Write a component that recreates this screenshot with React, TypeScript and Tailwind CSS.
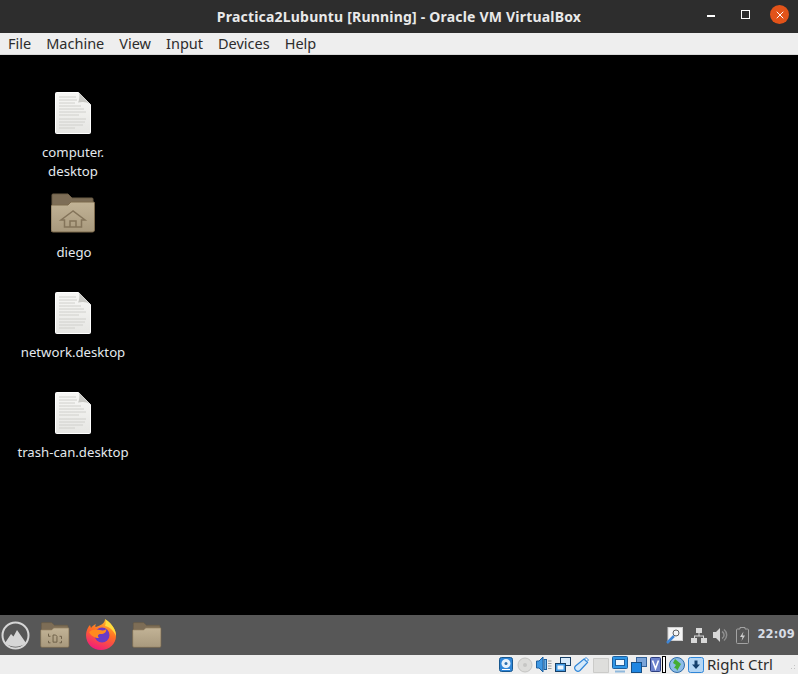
import type { ReactNode } from "react";
import { X } from "lucide-react";

const menus = ["File", "Machine", "View", "Input", "Devices", "Help"];

function DocIcon() {
  return (
    <svg width="36" height="42" viewBox="0 0 36 42">
      <defs>
        <linearGradient id="paper" x1="0" y1="0" x2="0" y2="1">
          <stop offset="0" stopColor="#f8f8f6" />
          <stop offset="1" stopColor="#e6e6e3" />
        </linearGradient>
      </defs>
      <path d="M1.500 0.500h22l12 12v28a1 1 0 0 1-1 1H1.500a1 1 0 0 1-1-1V1.500a1 1 0 0 1 1-1z" fill="url(#paper)" stroke="#ffffff" />
      <path d="M24 0.500c1 4 0 8-1 10 4-1 9-1 12.500 2z" fill="#c9c9c5" />
      <g stroke="#d0d0cc" strokeWidth="1">
        <path d="M4 5h17M4 8h18M4 11h16M4 14h22M4 17h25M4 20h27M4 23h20" />
        <path d="M4 27h27M4 30h26M4 33h24M4 36h16" />
      </g>
    </svg>
  );
}

function Folder({ w, h, children }: { w: number; h: number; children?: ReactNode }) {
  return (
    <svg width={w} height={h} viewBox="0 0 44 40">
      <defs>
        <linearGradient id="folderBody" x1="0" y1="0" x2="0" y2="1">
          <stop offset="0" stopColor="#c2b396" />
          <stop offset="1" stopColor="#a8997d" />
        </linearGradient>
      </defs>
      <path d="M2 1h15l4 4h20a1 1 0 0 1 1 1v10H1V2a1 1 0 0 1 1-1z" fill="#7d6d56" stroke="#6b5c45" />
      <path d="M1 12h16l3-3h22.500a1 1 0 0 1 1 1v27a2 2 0 0 1-2 2H2a2 2 0 0 1-2-2V13z" fill="url(#folderBody)" stroke="#7d6a4d" />
      {children}
    </svg>
  );
}

function Label({ children }: { children: string }) {
  return <div className="text-center text-[13.2px] leading-[19px] text-[#e4e9ee]">{children}</div>;
}

function Firefox() {
  return (
    <svg width="32" height="32" viewBox="0 0 32 32">
      <defs>
        <linearGradient id="ff" x1="0.75" y1="0" x2="0.35" y2="1">
          <stop offset="0" stopColor="#ffc22e" />
          <stop offset="0.45" stopColor="#ff6f24" />
          <stop offset="1" stopColor="#f01a7c" />
        </linearGradient>
      </defs>
      <path d="M20 1c1 3 4 4 7 7 4 4 4 8 4 10 0 8-7 14-15 14S1 26 1 17c0-4 2-8 4-10l1 3c1-2 3-3 5-4-1 2-1 3 0 3 3-1 9-3 9-8z" fill="url(#ff)" />
      <path d="M20 1c5 3 11 9 11 17-2-5-6-9-11-10 1-2 1-5 0-7z" fill="#ffdc3e" />
      <circle cx="17" cy="17" r="7.500" fill="#6a3bc4" />
      <path d="M4 14c3-3 8-3 11-2 3 1 6 0 6-1 1 3-2 5-5 5-3 0-4 2-2 4-4 0-8-2-10-6z" fill="#ff8a1e" />
    </svg>
  );
}

function StatusIcons() {
  return (
    <div className="flex items-center gap-[3px]">
      {/* hard disk */}
      <svg width="16" height="17" viewBox="0 0 16 17">
        <rect x="1.500" y="1.500" width="13" height="14" rx="2" fill="#2f86d8" stroke="#17578f" />
        <circle cx="8" cy="7.500" r="4.500" fill="#e8f2fb" />
        <circle cx="8" cy="7.500" r="1.500" fill="#2b6fae" />
        <path d="M4 13.500h8" stroke="#ffffff" />
      </svg>
      {/* optical disk */}
      <svg width="16" height="16" viewBox="0 0 16 16">
        <circle cx="8" cy="8" r="7" fill="#dcdcda" stroke="#c4c4c2" />
        <circle cx="8" cy="8" r="2" fill="#c6c6c4" />
      </svg>
      {/* audio */}
      <svg width="16" height="17" viewBox="0 0 16 17">
        <path d="M0.500 5h2.500l4-4v15l-4-4H0.500z" fill="#3f97e2" stroke="#1c5f9e" />
        <rect x="8" y="3.500" width="2.500" height="10" fill="#67aee8" stroke="#1c5f9e" />
        <path d="M12 5h3.500M12 7.500h3.500M12 10h3.500M12 12.500h3.500" stroke="#9a9a9a" />
      </svg>
      {/* network */}
      <svg width="16" height="16" viewBox="0 0 16 16">
        <rect x="5.500" y="0.500" width="10" height="8" fill="#d8eafa" stroke="#173f66" />
        <rect x="0.500" y="6.500" width="10" height="8" fill="#3f97e2" stroke="#173f66" />
        <rect x="2.500" y="8.500" width="6" height="4" fill="#eef6fd" />
      </svg>
      {/* usb */}
      <svg width="16" height="17" viewBox="0 0 16 17">
        <path d="M10 3l3.500 3.500-7.500 8a3 3 0 0 1-4 0l-.5-.5a3 3 0 0 1 0-4z" fill="#d4e9fb" stroke="#2f86d8" strokeWidth="1.200" />
        <path d="M10.500 3L12 1.500l2.500 2.500L13 5.500z" fill="#ffffff" stroke="#2f86d8" />
      </svg>
      {/* shared folders */}
      <svg width="16" height="16" viewBox="0 0 16 16">
        <path d="M0.500 1.500h15v14h-15z" fill="#dededc" stroke="#cbcbc9" />
      </svg>
      {/* display */}
      <svg width="16" height="17" viewBox="0 0 16 17">
        <rect x="0.500" y="0.500" width="15" height="12" rx="1" fill="#2f96e6" stroke="#1c5f9e" />
        <rect x="3.500" y="3.500" width="9" height="6" fill="#eef6fd" stroke="#1c5f9e" />
        <path d="M3 15.500h10" stroke="#8fb8dc" strokeWidth="2" />
      </svg>
      {/* video capture */}
      <svg width="16" height="16" viewBox="0 0 16 16">
        <rect x="5.500" y="0.500" width="10" height="9" fill="#7ba4d8" stroke="#33629a" />
        <rect x="0.500" y="5.500" width="10" height="10" fill="#1f86e2" stroke="#174f86" />
      </svg>
      {/* vt-x chip + cursor bar */}
      <div className="flex w-[16px] items-center gap-[1px]">
        <svg width="11" height="17" viewBox="0 0 11 17">
          <rect x="0.500" y="1.500" width="10" height="14" rx="1" fill="#6c82cc" stroke="#2d3f80" />
          <path d="M2.500 4.500l3 8 3-8" fill="none" stroke="#ffffff" strokeWidth="1.600" />
        </svg>
        <div className="h-[17px] w-[4px] border border-black bg-white" />
      </div>
      {/* guest additions */}
      <svg width="16" height="16" viewBox="0 0 16 16">
        <circle cx="8" cy="8" r="7.500" fill="#8cbce8" stroke="#2f6ca8" />
        <path d="M6 2l6 5-4 7c0-2-1-3-3-3l2-3-3-2z" fill="#44ad33" />
      </svg>
      {/* mouse capture */}
      <svg width="16" height="16" viewBox="0 0 16 16">
        <rect x="0.500" y="0.500" width="15" height="15" rx="2" fill="#b4d6f5" stroke="#2f86d8" />
        <path d="M6.500 3.500h3v4H12L8 12 4 7.500h2.500z" fill="#14406e" />
      </svg>
    </div>
  );
}

export default function App() {
  return (
    <div className="flex h-[674px] w-[798px] flex-col overflow-hidden bg-black font-['Noto_Sans',sans-serif]">
      {/* title bar */}
      <header className="relative flex h-[33px] shrink-0 items-center justify-center bg-[#2d2d2d]">
        <span className="text-[14px] font-bold tracking-[0.2px] text-[#e9e9e9]">Practica2Lubuntu [Running] - Oracle VM VirtualBox</span>
        <div className="absolute right-[9px] top-[5px] flex items-start">
          <div className="mt-[10px] h-[2px] w-[8px] bg-white" />
          <div className="ml-[26px] mt-[5px] h-[9px] w-[9px] border border-white" />
          <div className="ml-[20px] flex h-[19px] w-[19px] items-center justify-center rounded-full bg-[#e25319] text-white">
            <X size={12} strokeWidth={2} />
          </div>
        </div>
      </header>

      {/* menu bar */}
      <nav className="flex h-[22px] shrink-0 items-center gap-[15px] border-b border-[#d8d8d8] bg-[#eeeeee] pl-[8px] text-[14.5px] text-[#2c2c2c]">
        {menus.map((m) => (
          <span key={m}>{m}</span>
        ))}
      </nav>

      {/* guest desktop, icons sit on a free canvas */}
      <main className="relative flex-1 bg-black">
        <div className="absolute left-[55px] top-[37px]"><DocIcon /></div>
        <div className="absolute left-[24px] top-[88px] w-[98px]">
          <Label>computer.</Label>
          <Label>desktop</Label>
        </div>
        <div className="absolute left-[51px] top-[138px]">
          <Folder w={44} h={40}>
            <path d="M22 18L10 27h3.500v7h17v-7H34z" fill="none" stroke="#84745a" strokeWidth="1.500" />
            <path d="M19 34v-6h6v6" fill="none" stroke="#84745a" strokeWidth="1.500" />
          </Folder>
        </div>
        <div className="absolute left-[25px] top-[188px] w-[98px]"><Label>diego</Label></div>
        <div className="absolute left-[55px] top-[237px]"><DocIcon /></div>
        <div className="absolute left-[14px] top-[288px] w-[118px]"><Label>network.desktop</Label></div>
        <div className="absolute left-[55px] top-[337px]"><DocIcon /></div>
        <div className="absolute left-[8px] top-[388px] w-[130px]"><Label>trash-can.desktop</Label></div>
      </main>

      {/* lubuntu panel */}
      <div className="flex h-[40px] shrink-0 items-center bg-[#575757] pl-[1px] pr-[3px]">
        <svg width="29" height="29" viewBox="0 0 29 29">
          <circle cx="14.500" cy="14.500" r="13" fill="none" stroke="#d6d6d6" strokeWidth="2" />
          <path d="M4 22l6-9 2.500 2.500L16 9l9 13c-6 5-15 5-21 0z" fill="#d6d6d6" />
        </svg>
        <div className="ml-[10px]">
          <Folder w={30} h={26}>
            <path d="M15 22h-3v-4M29 22h3v4M15 32h-3v-3M29 32h3v-3" fill="none" stroke="#6e6048" strokeWidth="1.500" />
            <path d="M19 20h4l2 2v9h-6z" fill="none" stroke="#6e6048" strokeWidth="1.500" />
          </Folder>
        </div>
        <div className="ml-[15px] mt-[-2px]"><Firefox /></div>
        <div className="ml-[15px]"><Folder w={30} h={26} /></div>

        <div className="ml-auto flex items-center">
          <svg width="17" height="17" viewBox="0 0 17 17">
            <rect x="2" y="0.500" width="14.500" height="13" fill="#f4f4f4" stroke="#cfcfcf" />
            <circle cx="10" cy="6" r="3" fill="none" stroke="#5d5d5d" />
            <path d="M1 16l7-7" stroke="#3f86d6" strokeWidth="2.500" />
          </svg>
          <svg width="16" height="15" viewBox="0 0 16 15" fill="#d8d8d8" className="ml-[8px]">
            <rect x="5" y="0" width="6" height="5" />
            <rect x="0" y="10" width="6" height="5" />
            <rect x="10" y="10" width="6" height="5" />
            <path d="M7.500 5h1v2.500H13V10h-1V8.500H4V10H3V7.500h4.500z" />
          </svg>
          <svg width="15" height="14" viewBox="0 0 15 14" className="ml-[6px]">
            <path d="M0 4h3l4-4v14l-4-4H0z" fill="#d8d8d8" />
            <path d="M9 3.500a4 4 0 0 1 0 7M11 1.500a7 7 0 0 1 0 11" fill="none" stroke="#8f8f8f" strokeWidth="1.500" />
          </svg>
          <svg width="13" height="17" viewBox="0 0 13 17" className="ml-[8px]">
            <path d="M4 0.500h5v1.500h2.500a1 1 0 0 1 1 1v12.500a1 1 0 0 1-1 1h-10a1 1 0 0 1-1-1V3a1 1 0 0 1 1-1H4z" fill="none" stroke="#a3a3a3" />
            <path d="M7.500 4.500L4 10h2.500l-1 4 3.500-5.500H6.500z" fill="#cfcfcf" />
          </svg>
          <span className="ml-[8px] font-['DejaVu_Sans',sans-serif] text-[11.5px] font-bold tracking-[0.2px] text-[#d7dde6]">22:09</span>
        </div>
      </div>

      {/* vbox status bar */}
      <footer className="flex h-[19px] shrink-0 items-center justify-end bg-[#eeeeee] pr-[2px]">
        <StatusIcons />
        <span className="ml-[3px] text-[15px] leading-none text-[#2c2c2c]">Right Ctrl</span>
        <svg width="5" height="5" viewBox="0 0 5 5" fill="#c4c4c4" className="ml-[18px] mt-[6px]">
          <rect x="3" y="0" width="1" height="1" />
          <rect x="0" y="3" width="1" height="1" />
          <rect x="3" y="3" width="1" height="1" />
        </svg>
      </footer>
    </div>
  );
}
